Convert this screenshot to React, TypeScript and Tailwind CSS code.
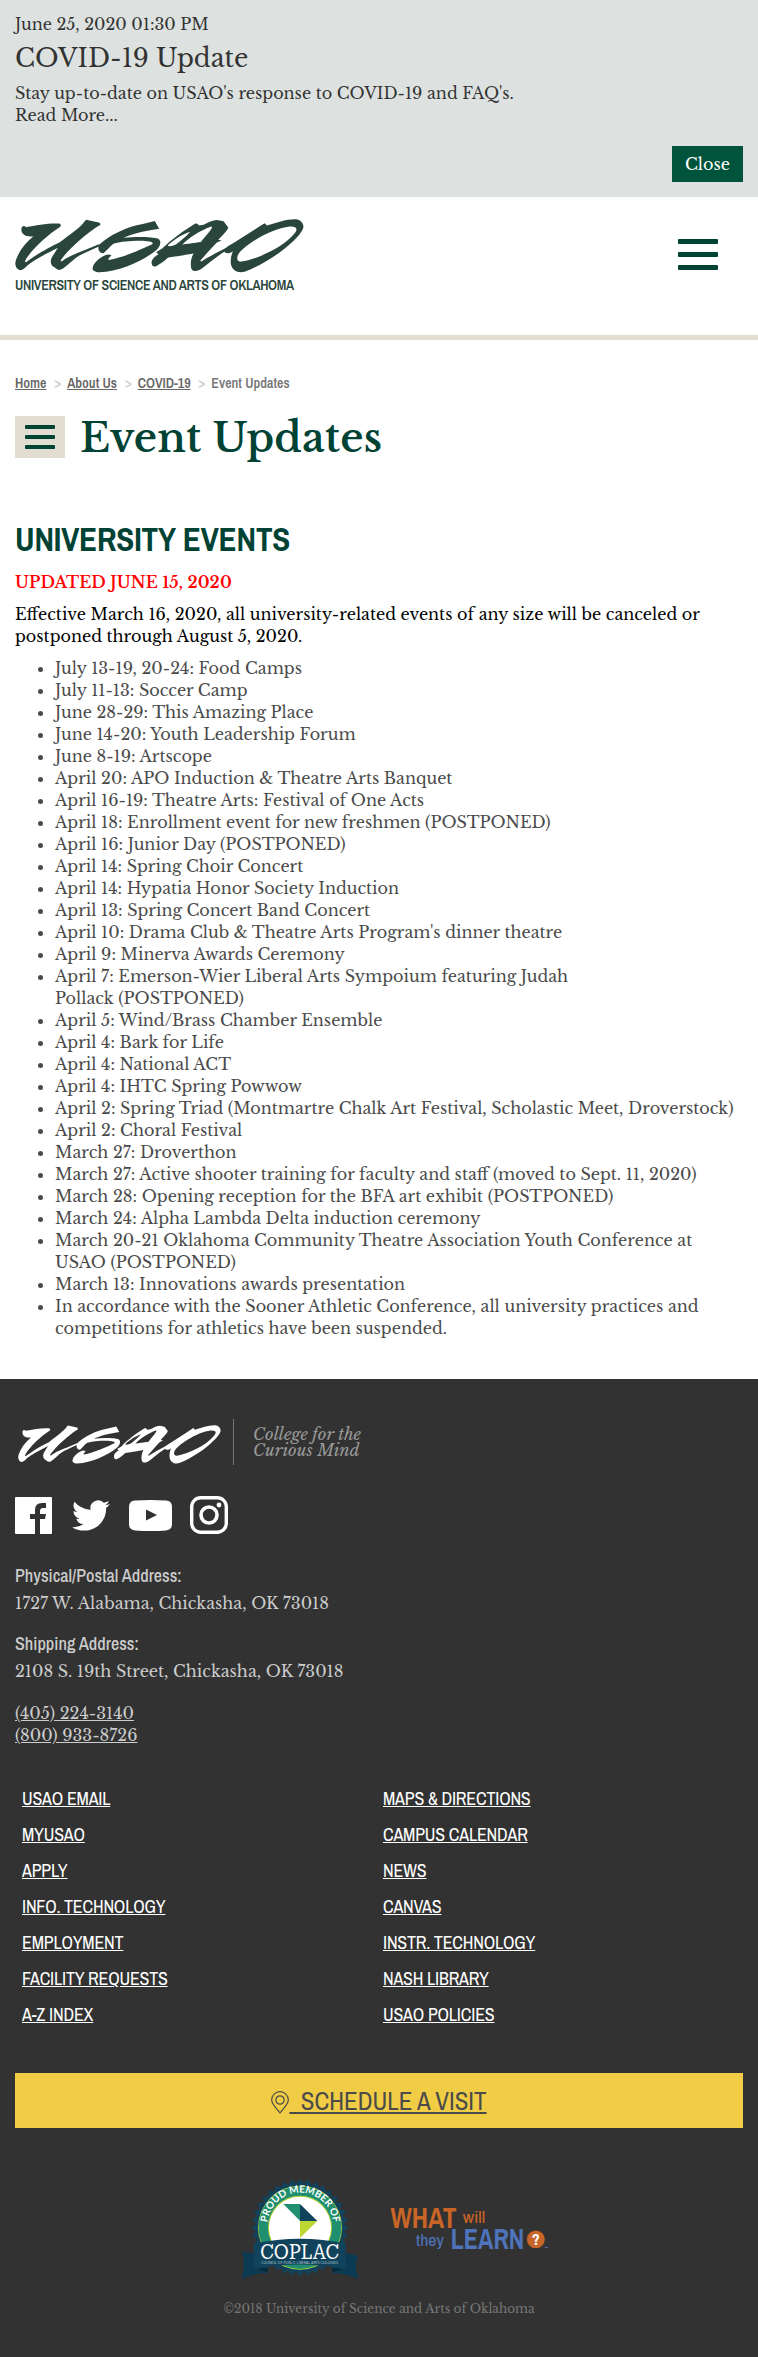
import React from "react";

const events = [
  "July 13-19, 20-24: Food Camps",
  "July 11-13: Soccer Camp",
  "June 28-29: This Amazing Place",
  "June 14-20: Youth Leadership Forum",
  "June 8-19: Artscope",
  "April 20: APO Induction & Theatre Arts Banquet",
  "April 16-19: Theatre Arts: Festival of One Acts",
  "April 18: Enrollment event for new freshmen (POSTPONED)",
  "April 16: Junior Day (POSTPONED)",
  "April 14: Spring Choir Concert",
  "April 14: Hypatia Honor Society Induction",
  "April 13: Spring Concert Band Concert",
  "April 10: Drama Club & Theatre Arts Program's dinner theatre",
  "April 9: Minerva Awards Ceremony",
  "April 7: Emerson-Wier Liberal Arts Sympoium featuring Judah Pollack\u00a0(POSTPONED)",
  "April 5: Wind/Brass Chamber Ensemble",
  "April 4: Bark for Life",
  "April 4: National ACT",
  "April 4: IHTC Spring Powwow",
  "April 2: Spring Triad (Montmartre Chalk Art Festival, Scholastic Meet, Droverstock)",
  "April 2: Choral Festival",
  "March 27: Droverthon",
  "March 27: Active shooter training for faculty and staff (moved to Sept. 11, 2020)",
  "March 28: Opening reception for the BFA art exhibit (POSTPONED)",
  "March 24: Alpha Lambda Delta induction ceremony",
  "March 20-21 Oklahoma Community Theatre Association Youth Conference at USAO (POSTPONED)",
  "March 13: Innovations awards presentation",
  "In accordance with the Sooner Athletic Conference, all university practices and competitions for athletics have been suspended.",
];

const footerLinks = [
  ["USAO EMAIL", "MYUSAO", "APPLY", "INFO. TECHNOLOGY", "EMPLOYMENT", "FACILITY REQUESTS", "A-Z INDEX"],
  ["MAPS & DIRECTIONS", "CAMPUS CALENDAR", "NEWS", "CANVAS", "INSTR. TECHNOLOGY", "NASH LIBRARY", "USAO POLICIES"],
];

function Wordmark({ className }: { className: string }) {
  return (
    <svg viewBox="17 26 866 166" preserveAspectRatio="none" fill="currentColor" fillRule="evenodd" className={className} aria-label="USAO">
      <path d="M36 55C38 46 45 45 50 51C80 45 120 38 149 40C156 42 156 48 150 52C120 70 60 125 47 156C48 161 52 158 55 155C85 132 125 110 150 98C180 75 215 50 224 35L230 28L268 37C275 40 274 44 268 47C235 68 180 115 155 151C152 156 156 158 160 154C185 135 230 122 268 104L270 110C240 124 215 134 200 145C185 157 168 174 158 180C150 185 143 182 137 176C123 170 121 155 128 143L145 115C105 135 75 152 55 168C40 184 32 187 25 180C16 171 16 158 23 144C35 115 52 98 72 79C50 82 35 74 36 55Z" />
      <path d="M268 106C300 75 350 50 400 41L436 32L449 56C400 63 360 75 342 84C380 80 430 81 446 87C458 95 452 110 440 122C400 155 330 188 270 190C255 189 247 183 250 175C252 160 275 140 295 135L306 137C300 145 294 150 298 152C340 145 400 118 428 104C435 96 415 92 380 93C350 94 325 98 312 102C300 112 290 125 282 131C270 132 264 120 268 106Z" />
      <path d="M440 128L458 117C485 88 525 60 555 41C562 38 565 40 568 46L582 44C595 38 605 30 622 29L642 33L656 52C655 60 640 75 626 90L636 92L622 98C600 120 585 140 572 154L575 157C600 140 640 120 665 106L670 112C635 130 605 155 580 176C562 190 550 188 545 178C542 160 545 145 552 132C520 138 490 142 475 145C465 155 450 165 440 171C430 176 424 165 427 154C430 146 437 140 447 134ZM475 107C492 90 520 72 542 65C530 80 510 95 500 104C490 110 475 112 475 107ZM518 105C535 85 575 60 605 49C615 50 590 75 574 97C555 100 530 103 518 105Z" />
      <path d="M655 110C690 88 730 62 765 39L772 46C800 38 830 26 858 27C875 29 885 43 880 56C865 92 780 160 705 188C685 193 668 185 664 165C662 150 665 137 670 125C655 137 640 130 645 120ZM684 140C690 115 780 55 840 49C862 48 865 58 855 70C820 115 740 150 695 157C684 158 681 150 684 140Z" />
    </svg>
  );
}

function CoplacBadge() {
  const teeth = Array.from({ length: 36 }, (_, i) => i * 10);
  return (
    <svg viewBox="0 0 354 306" className="h-[102px] w-[118px]" aria-label="COPLAC">
      <defs>
        <path id="badge-arc" d="M79 143A99 99 0 0 1 277 143" />
      </defs>
      {teeth.map((a) => (
        <path key={a} d="M163 20L177 3L191 20Z" fill="#12435c" transform={`rotate(${a} 177 149)`} />
      ))}
      <circle cx="177" cy="149" r="132" fill="#12435c" />
      <circle cx="177" cy="149" r="126" fill="#b6d33b" />
      <circle cx="177" cy="149" r="124" fill="#1f8f70" />
      <circle cx="177" cy="149" r="96" fill="#b6d33b" />
      <circle cx="177" cy="149" r="93" fill="#fff" />
      <text fontFamily="Lato, sans-serif" fontWeight="700" fontSize="30" fill="#fff">
        <textPath href="#badge-arc" startOffset="50%" textAnchor="middle" textLength="292">PROUD MEMBER OF</textPath>
      </text>
      <path d="M127 78H177V128Z" fill="#1f8f70" />
      <path d="M177 78L229 129H177Z" fill="#12435c" />
      <path d="M177 129H229L177 180Z" fill="#bdd732" />
      <path d="M40 226L2 223Q15 250 2 303Q40 285 80 284V225Z" fill="#0b3a53" />
      <path d="M314 226L352 233Q338 255 352 303Q315 287 274 284V225Z" fill="#0b3a53" />
      <path d="M80 270V284L50 273Z" fill="#082a3d" />
      <path d="M274 270V284L304 273Z" fill="#082a3d" />
      <path d="M38 197Q177 168 314 197V273Q177 246 38 273Z" fill="#12435c" />
      <text x="176" y="242" textAnchor="middle" textLength="236" lengthAdjust="spacingAndGlyphs" fontFamily="'Roboto Serif', 'Liberation Serif', serif" fontSize="62" fill="#fff">COPLAC</text>
      <text x="176" y="257" textAnchor="middle" textLength="230" fontFamily="'Open Sans', sans-serif" fontSize="11" fill="#b9cbd3">COUNCIL OF PUBLIC LIBERAL ARTS COLLEGES</text>
    </svg>
  );
}

function LearnLogo() {
  return (
    <svg viewBox="0 0 480 130" className="h-[43px] w-[160px] overflow-visible" fontFamily="'Archivo Narrow', 'Roboto Condensed', sans-serif" aria-label="What will they learn?">
      <text x="0" y="64" fontSize="88" fontWeight="700" textLength="199" lengthAdjust="spacingAndGlyphs" fill="#c96527">WHAT</text>
      <text x="218" y="48" fontSize="52" textLength="68" lengthAdjust="spacingAndGlyphs" fill="#c96527">will</text>
      <text x="77" y="118" fontSize="52" textLength="84" lengthAdjust="spacingAndGlyphs" fill="#4f74bb">they</text>
      <text x="182" y="127" fontSize="88" fontWeight="700" textLength="222" lengthAdjust="spacingAndGlyphs" fill="#4f74bb">LEARN</text>
      <circle cx="439" cy="98" r="27" fill="#c96527" />
      <text x="439" y="114" textAnchor="middle" fontSize="48" fontWeight="700" fill="#fff">?</text>
      <path d="M466 122H476" stroke="#4f74bb" strokeWidth="3" />
    </svg>
  );
}

function Bars({ className, bar }: { className: string; bar: string }) {
  return (
    <span className={className}>
      <span className={bar} />
      <span className={bar} />
      <span className={bar} />
    </span>
  );
}

export default function App() {
  return (
    <div className="w-full bg-white font-['Libre_Baskerville','Liberation_Serif',serif] text-[16px] leading-[22px] text-[#333]">
      <section className="h-[197px] bg-[#dde2e0] px-[15px] pt-[13px]">
        <p>June 25, 2020 01:30 PM</p>
        <h2 className="mt-[7px] text-[25px] leading-[34px]">COVID-19 Update</h2>
        <p className="mt-[6px]">Stay up-to-date on USAO's response to COVID-19 and FAQ's.</p>
        <p>Read More...</p>
        <div className="mt-[20px] flex justify-end">
          <button className="h-[36px] w-[71px] bg-[#00543c] text-center text-white">Close</button>
        </div>
      </section>

      <header className="flex h-[143px] items-start justify-between border-b-[5px] border-[#e2ddd1] pl-[15px] pr-[40px]">
        <div className="pt-[22px] text-[#2a463c]">
          <Wordmark className="h-[54px] w-[289px]" />
          <p className="mt-[3px] whitespace-nowrap font-['Archivo_Narrow','Roboto_Condensed',sans-serif] text-[14px] font-semibold leading-[18px] tracking-[-0.32px]">UNIVERSITY OF SCIENCE AND ARTS OF OKLAHOMA</p>
        </div>
        <Bars className="mt-[42px] flex w-[40px] flex-col gap-[8px]" bar="h-[5px] rounded-[1px] bg-[#004234]" />
      </header>

      <main className="px-[15px] pt-[33px]">
        <nav className="flex h-[20px] items-center font-['Archivo_Narrow','Roboto_Condensed',sans-serif] text-[14px] font-semibold leading-[20px] text-[#666]">
          <a className="underline">Home</a>
          <span className="ml-[8px] mr-[6px] text-[#ccc]">&gt;</span>
          <a className="underline">About Us</a>
          <span className="ml-[8px] mr-[6px] text-[#ccc]">&gt;</span>
          <a className="underline">COVID-19</a>
          <span className="ml-[8px] mr-[6px] text-[#ccc]">&gt;</span>
          <span className="text-[#777]">Event Updates</span>
        </nav>

        <div className="mt-[14px] flex h-[60px] items-center">
          <Bars className="flex h-[42px] w-[50px] flex-col gap-[6px] bg-[#e2ddd1] px-[10px] pt-[9px]" bar="h-[4px] rounded-[1px] bg-[#004234]" />
          <h1 className="ml-[15px] mt-[2px] text-[40px] font-semibold leading-[60px] tracking-[0.16px] text-[#004234]">Event Updates</h1>
        </div>

        <h2 className="mt-[52px] font-['Archivo_Narrow','Roboto_Condensed',sans-serif] text-[33px] font-bold leading-[40px] tracking-[-0.15px] text-[#004234]">UNIVERSITY EVENTS</h2>
        <p className="mt-[12px] font-semibold tracking-[0.05px] text-[#f00]">UPDATED JUNE 15, 2020</p>
        <p className="mt-[10px] text-black">Effective March 16, 2020, all university-related events of any size will be canceled or postponed through August 5, 2020.</p>
        <ul className="mt-[10px] list-disc pl-[40px] text-[#4a4a4a]">
          {events.map((e) => (
            <li key={e}>{e}</li>
          ))}
        </ul>
      </main>

      <footer className="mt-[40px] h-[978px] bg-[#323232] px-[15px] pt-[40px] text-[#ccc]">
        <div className="flex h-[46px] items-start">
          <Wordmark className="ml-[3px] mt-[6px] h-[39px] w-[203px] text-white" />
          <div className="ml-[12px] h-[46px] w-px bg-[#777]" />
          <p className="ml-[19px] mt-[7px] text-[16.5px] italic leading-[16px] text-[#999]">
            College for the
            <br />
            Curious Mind
          </p>
        </div>

        <div className="mt-[31px] flex h-[38px] items-center text-white">
          <svg viewBox="0 0 37 37" className="size-[37px]" fill="currentColor">
            <path d="M1 0H36Q37 0 37 1V36Q37 37 36 37H25V22H30L31 17H25V14Q25 11 28 11H31V6H27Q20 6 20 13V17H15V22H20V37H1Q0 37 0 36V1Q0 0 1 0Z" />
          </svg>
          <svg viewBox="0 2 24 20" preserveAspectRatio="none" className="ml-[20px] h-[31px] w-[38px]" fill="currentColor">
            <path d="M23.95 4.57a10 10 0 0 1-2.82.77 4.96 4.96 0 0 0 2.16-2.72c-.95.56-2 .96-3.12 1.18a4.92 4.92 0 0 0-8.38 4.48C7.69 8.1 4.07 6.13 1.64 3.16a4.92 4.92 0 0 0 1.52 6.57 4.9 4.9 0 0 1-2.23-.61v.06a4.92 4.92 0 0 0 3.95 4.83 5 5 0 0 1-2.21.08 4.94 4.94 0 0 0 4.6 3.42A9.87 9.87 0 0 1 0 19.54a13.99 13.99 0 0 0 7.55 2.21c9.05 0 14-7.5 14-13.98 0-.21 0-.42-.02-.63a9.94 9.94 0 0 0 2.42-2.57z" />
          </svg>
          <svg viewBox="0 0 43 31" className="ml-[19px] h-[31px] w-[43px]" fill="currentColor" fillRule="evenodd">
            <path d="M6 .6Q21.500-.6 37 .6Q43 1 43 7V24Q43 30 37 30.400Q21.500 31.600 6 30.400Q0 30 0 24V7Q0 1 6 .6ZM17 9.500V20.500L28 15Z" />
          </svg>
          <svg viewBox="0 0 38 38" className="ml-[18px] size-[38px]" fill="none" stroke="currentColor" strokeWidth="3.400">
            <rect x="1.700" y="1.700" width="34.600" height="34.600" rx="9" />
            <circle cx="19" cy="19" r="8" strokeWidth="3.600" />
            <circle cx="29" cy="9" r="2.400" fill="currentColor" stroke="none" />
          </svg>
        </div>

        <h3 className="mt-[31px] font-['Archivo_Narrow','Roboto_Condensed',sans-serif] text-[18px] font-medium leading-[22px]">Physical/Postal Address:</h3>
        <p className="mt-[5px]">1727 W. Alabama, Chickasha, OK 73018</p>
        <h3 className="mt-[19px] font-['Archivo_Narrow','Roboto_Condensed',sans-serif] text-[18px] font-medium leading-[22px]">Shipping Address:</h3>
        <p className="mt-[5px]">2108 S. 19th Street, Chickasha, OK 73018</p>
        <p className="mt-[20px] underline">(405) 224-3140</p>
        <p className="underline">(800) 933-8726</p>

        <div className="mt-[35px] grid grid-cols-[361px_1fr] pl-[7px]">
          {footerLinks.map((col) => (
            <ul key={col[0]} className="font-['Archivo_Narrow','Roboto_Condensed',sans-serif] text-[18px] leading-[36px] tracking-[-0.2px] text-white">
              {col.map((l) => (
                <li key={l}>
                  <a className="underline">{l}</a>
                </li>
              ))}
            </ul>
          ))}
        </div>

        <div className="mt-[40px] flex h-[55px] items-center justify-center bg-[#f0cd45] font-['Archivo_Narrow','Roboto_Condensed',sans-serif] text-[25px] text-[#4a4a4a]">
          <svg viewBox="0 0 18 23" className="mt-[3px] h-[23px] w-[18px]" fill="none" stroke="currentColor" strokeWidth="1.200">
            <path d="M9 22C5 17 .7 13 .7 9A8.300 8.300 0 0 1 17.300 9C17.300 13 13 17 9 22Z" />
            <circle cx="9" cy="9" r="4.200" />
          </svg>
          <a className="whitespace-pre underline">{"  SCHEDULE A VISIT"}</a>
        </div>

        <div className="mt-[50px] flex h-[102px] items-start pl-[226px]">
          <CoplacBadge />
          <div className="ml-[31px] mt-[29px]">
            <LearnLogo />
          </div>
        </div>
        <p className="mt-[18px] text-center text-[12px] leading-[22px] text-[#777]">©2018 University of Science and Arts of Oklahoma</p>
      </footer>
    </div>
  );
}
